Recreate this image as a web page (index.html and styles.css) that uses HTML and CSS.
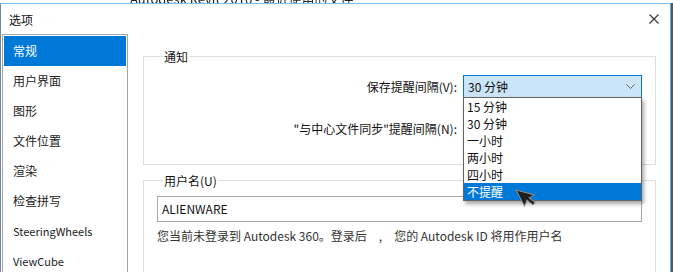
FILE: index.html
```html
<!DOCTYPE html>
<html>
<head>
    <title>选项</title>
    <link rel="stylesheet" href="styles.css">
</head>
<body>
    <div class="backdrop"><span>Autodesk Revit 2016 - 最近使用的文件</span></div>

    <div class="screen">
        <div class="dialog">
            <div class="titlebar">
                <span class="title">选项</span>
                <svg class="close" width="10" height="10" viewBox="0 0 10 10">
                    <path d="M0.5 0.5 L9.5 9.5 M9.5 0.5 L0.5 9.5" stroke="#333" stroke-width="1.1" fill="none"/>
                </svg>
            </div>

            <div class="content">
                <ul class="sidebar">
                    <li class="active">常规</li>
                    <li>用户界面</li>
                    <li>图形</li>
                    <li>文件位置</li>
                    <li>渲染</li>
                    <li>检查拼写</li>
                    <li class="latin">SteeringWheels</li>
                    <li class="latin">ViewCube</li>
                </ul>

                <div class="main">
                    <fieldset class="group notify">
                        <legend>通知</legend>
                        <div class="row first">
                            <label>保存提醒间隔(V):</label>
                            <div class="combo">
                                <div class="combo-box">
                                    <span>30 分钟</span>
                                    <svg width="9" height="6" viewBox="0 0 9 6">
                                        <path d="M0.5 0.5 L4.5 4.5 L8.5 0.5" stroke="#666" stroke-width="1" fill="none"/>
                                    </svg>
                                </div>
                                <ul class="combo-list">
                                    <li>15 分钟</li>
                                    <li>30 分钟</li>
                                    <li>一小时</li>
                                    <li>两小时</li>
                                    <li>四小时</li>
                                    <li class="selected">不提醒</li>
                                </ul>
                            </div>
                        </div>
                        <div class="row">
                            <label>"与中心文件同步"提醒间隔(N):</label>
                            <div class="combo-spacer"></div>
                        </div>
                    </fieldset>

                    <fieldset class="group user">
                        <legend>用户名(U)</legend>
                        <div class="textbox">ALIENWARE</div>
                        <p class="note">您当前未登录到 Autodesk 360。登录后&emsp;,&emsp;您的 Autodesk ID 将用作用户名</p>
                    </fieldset>
                </div>
            </div>
        </div>
        <div class="desk"></div>
    </div>

    <svg class="cursor" width="26" height="28" viewBox="0 0 26 28">
        <g transform="translate(3 2) rotate(-28 0 0)">
            <polygon points="0,0 0,18 5,14 8,21 11,20 8,13 14,13" fill="#1e1e1e" stroke="#8a8a8a" stroke-width="1"/>
        </g>
    </svg>
</body>
</html>
```

FILE: styles.css
```css
body {
    margin: 0;
    width: 673px;
    height: 272px;
    overflow: hidden;
    position: relative;
    background: #fff;
    font-family: "Noto Sans CJK SC", "Noto Sans", sans-serif;
    font-size: 12px;
    color: #111;
}
ul { list-style: none; margin: 0; padding: 0; }

.backdrop {
    height: 3px;
    overflow: hidden;
    display: flex;
    align-items: flex-end;
    padding-left: 130px;
}
.backdrop span {
    font-size: 13px;
    line-height: 8px;
    color: #222;
    filter: blur(0.5px);
}

.screen { display: flex; height: 269px; }
.desk { flex: 1; background: #55595f; }

.dialog {
    width: 669px;
    border-top: 1px solid #7cbcee;
    border-left: 1px solid #6d89a8;
    border-right: 1px solid #5ea8e6;
    background: #fff;
    display: flex;
    flex-direction: column;
    overflow: hidden;
}

.titlebar {
    flex-shrink: 0;
    height: 30px;
    display: flex;
    align-items: center;
    justify-content: space-between;
    padding: 0 11px 0 8px;
}
.title { color: #111; }

.content {
    flex: 1;
    min-height: 0;
    display: flex;
    padding-left: 1px;
}

.sidebar {
    width: 122px;
    padding: 1px;
    border: 1px solid #a5a5a5;
    border-bottom: none;
    color: #222;
}
.sidebar li {
    height: 30px;
    line-height: 30px;
    padding-left: 9px;
}
.sidebar li.latin { font-size: 11px; }
.sidebar li.active { background: #0078d7; color: #fff; }

.main { flex: 1; padding: 14px 14px 0 15px; }

.group {
    margin: 0;
    padding: 0 13px;
    border: 1px solid #dedede;
}
.group legend {
    margin-left: 6px;
    padding: 0 1px;
    line-height: 17px;
}

.notify { padding-bottom: 24px; }
.row {
    display: flex;
    justify-content: flex-end;
    align-items: center;
    height: 23px;
}
.row.first { margin-top: 10px; margin-bottom: 19px; }
.row label { margin-right: 6px; }

.combo { position: relative; }
.combo-box {
    border: 1px solid #0078d7;
    background: #cce4f7;
    display: flex;
    align-items: center;
    justify-content: space-between;
    padding: 0 6px 0 4px;
    box-sizing: border-box;
    width: 179px;
    height: 23px;
}
.combo-spacer { width: 179px; height: 23px; }

.combo-list {
    position: absolute;
    top: 22px;
    left: 0;
    width: 177px;
    border: 1px solid #646464;
    background: #fff;
    box-shadow: 2px 3px 4px rgba(0, 0, 0, 0.35);
    z-index: 2;
}
.combo-list li {
    height: 17px;
    line-height: 17px;
    padding-left: 3px;
}
.combo-list li.selected { background: #0078d7; color: #fff; }

.user { margin-top: 7px; height: 120px; }
.textbox {
    margin-top: 7px;
    height: 24px;
    line-height: 24px;
    border: 1px solid #a9a9a9;
    padding-left: 4px;
    color: #111;
}
.note {
    margin: 5px 0 0;
    color: #333;
    line-height: 18px;
    white-space: nowrap;
}

.cursor {
    position: absolute;
    left: 513px;
    top: 188px;
    z-index: 5;
    filter: blur(0.6px);
}
```
